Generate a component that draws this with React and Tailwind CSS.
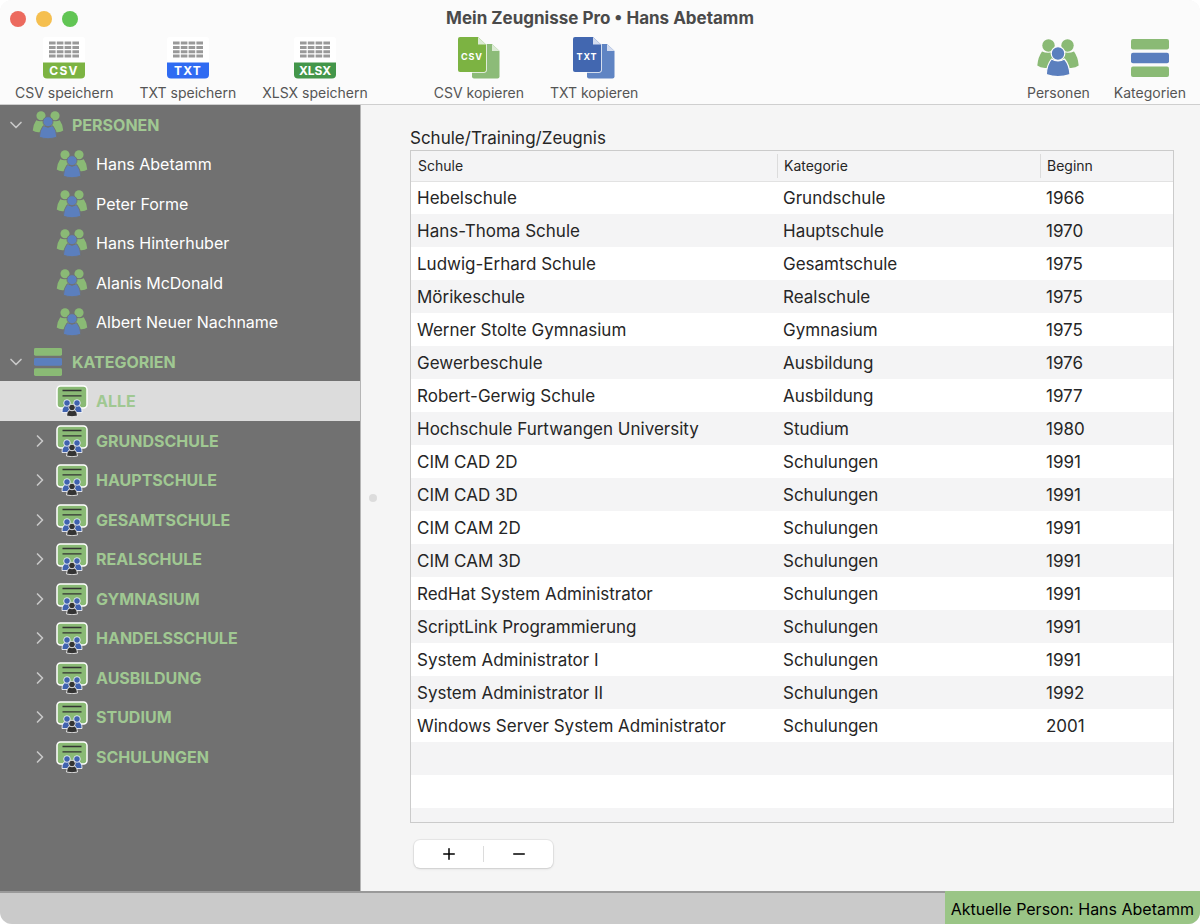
import { useState } from 'react';
import { ChevronDown, ChevronRight, Minus, Plus } from 'lucide-react';

const persons = ['Hans Abetamm', 'Peter Forme', 'Hans Hinterhuber', 'Alanis McDonald', 'Albert Neuer Nachname'];

const categories = [
  'ALLE',
  'GRUNDSCHULE',
  'HAUPTSCHULE',
  'GESAMTSCHULE',
  'REALSCHULE',
  'GYMNASIUM',
  'HANDELSSCHULE',
  'AUSBILDUNG',
  'STUDIUM',
  'SCHULUNGEN',
];

const records = [
  { school: 'Hebelschule', category: 'Grundschule', start: 1966 },
  { school: 'Hans-Thoma Schule', category: 'Hauptschule', start: 1970 },
  { school: 'Ludwig-Erhard Schule', category: 'Gesamtschule', start: 1975 },
  { school: 'Mörikeschule', category: 'Realschule', start: 1975 },
  { school: 'Werner Stolte Gymnasium', category: 'Gymnasium', start: 1975 },
  { school: 'Gewerbeschule', category: 'Ausbildung', start: 1976 },
  { school: 'Robert-Gerwig Schule', category: 'Ausbildung', start: 1977 },
  { school: 'Hochschule Furtwangen University', category: 'Studium', start: 1980 },
  { school: 'CIM CAD 2D', category: 'Schulungen', start: 1991 },
  { school: 'CIM CAD 3D', category: 'Schulungen', start: 1991 },
  { school: 'CIM CAM 2D', category: 'Schulungen', start: 1991 },
  { school: 'CIM CAM 3D', category: 'Schulungen', start: 1991 },
  { school: 'RedHat System Administrator', category: 'Schulungen', start: 1991 },
  { school: 'ScriptLink Programmierung', category: 'Schulungen', start: 1991 },
  { school: 'System Administrator I', category: 'Schulungen', start: 1991 },
  { school: 'System Administrator II', category: 'Schulungen', start: 1992 },
  { school: 'Windows Server System Administrator', category: 'Schulungen', start: 2001 },
];

// empty striped rows that fill the rest of the table
const fillerRows = [1, 2, 3, 4, 5, 6];

function PeopleIcon({ className, gap }) {
  return (
    <svg viewBox="0 0 42 38" className={className} aria-hidden="true">
      <g fill="#8aba75">
        <circle cx="11.5" cy="6.5" r="6.2" />
        <circle cx="30.5" cy="6.5" r="6.2" />
        <path d="M5 12.5Q11 15 17 12.5L18 29H8Q3 28.5 .3 26.5Q1 18 5 12.5Z" />
        <path d="M37 12.5Q31 15 25 12.5L24 29H34Q39 28.5 41.7 26.5Q41 18 37 12.5Z" />
      </g>
      <g fill="#5b7fbe" stroke={gap} strokeWidth="1.2">
        <path d="M14.5 20Q21 24 27.5 20Q32.5 26 33 35.5Q27 37.6 21 37.6Q15 37.6 9.3 35.5Q9.7 26 14.5 20Z" />
        <circle cx="21" cy="14.5" r="6.8" />
      </g>
    </svg>
  );
}

function BarsIcon({ className }) {
  return (
    <svg viewBox="0 0 38 38" className={className} aria-hidden="true">
      <rect width="38" height="10.5" rx="2" fill="#8aba75" />
      <rect y="13.7" width="38" height="10.5" rx="2" fill="#5b7fbe" />
      <rect y="27.4" width="38" height="10.5" rx="2" fill="#8aba75" />
    </svg>
  );
}

function BoardIcon() {
  return (
    <svg viewBox="0 0 32 32" className="size-8 shrink-0" aria-hidden="true">
      <rect x="1" y="1" width="30" height="22" rx="3.5" fill="#8aba75" stroke="#fff" strokeWidth="1.5" />
      <path d="M6.5 5.5H25.5M6.5 10.8H25.5" stroke="#333" strokeWidth="1.3" />
      <g fill="#3f62ae" stroke="#fff" strokeWidth=".8">
        <path d="M8 21L14 20V27.5H6Q5.5 24 8 21Z" />
        <path d="M24 21L18 20V27.5H26Q26.5 24 24 21Z" />
        <circle cx="11" cy="18" r="3.3" />
        <circle cx="21" cy="18" r="3.3" />
      </g>
      <g fill="#333" stroke="#fff" strokeWidth=".8">
        <path d="M13 25H19Q21.5 27.5 21.5 31Q16 32.5 10.5 31Q10.5 27.5 13 25Z" />
        <circle cx="16" cy="22.5" r="3.3" />
      </g>
    </svg>
  );
}

function SaveIcon({ label, color, spacing }) {
  return (
    <svg viewBox="0 0 42 42" className="size-[42px]" aria-hidden="true">
      <rect width="42" height="40" rx="3" fill="#fff" />
      <path d="M6 6H36M6 10.5H36M6 14.7H36M6 19H36" stroke="#999" strokeWidth="3" strokeDasharray="6.6 1.2" />
      <path d="M0 25.5H42V37.5Q42 41.5 38 41.5H4Q0 41.5 0 37.5Z" fill={color} />
      <text x="21" y="37.5" textAnchor="middle" fontSize="12" fontWeight="700" fill="#fff" className={spacing}>
        {label}
      </text>
    </svg>
  );
}

function CopyIcon({ label, front, back, fold }) {
  return (
    <svg viewBox="0 0 42 42" className="size-[42px]" aria-hidden="true">
      <path d="M14 9Q14 7 16 7H34L41.5 14V39.5Q41.5 41.5 39.5 41.5H16Q14 41.5 14 39.5Z" fill={back} />
      <path d="M34 7L41.5 14H34Z" fill={fold} />
      <path
        d="M0 2Q0 0 2 0H20L28 7.5V33Q28 35 26 35H2Q0 35 0 33Z"
        fill={front}
        stroke="#fbfbfb"
        strokeWidth="1.5"
        paintOrder="stroke"
      />
      <path d="M20 0L28 7.5H20Z" fill={fold} />
      <text x="14" y="23" textAnchor="middle" fontSize="9" fontWeight="700" fill="#fff" className="tracking-widest">
        {label}
      </text>
    </svg>
  );
}

function ToolButton({ label, children }) {
  return (
    <button type="button" className="flex flex-col items-center gap-1 text-sm leading-5 text-[#555]">
      <span className="flex h-[42px] items-center">{children}</span>
      {label}
    </button>
  );
}

function TreeGroup({ label, icon }) {
  return (
    <li className="flex h-[39px] items-center even:h-10">
      <button type="button" aria-expanded="true" className="flex h-full w-full items-center pl-[6px] font-bold text-[#a0c892]">
        <ChevronDown size={20} className="mr-[6px] text-[#c8c8c8]" />
        <span className="mr-2 flex w-8 justify-center">{icon}</span>
        {label}
      </button>
    </li>
  );
}

function TreeItem({ label, icon, expandable, selected, onClick, tone }) {
  return (
    <li className="flex h-[39px] items-center even:h-10">
      <button
        type="button"
        onClick={onClick}
        className={`flex h-full w-full items-center pl-[30px] text-left ${tone} ${selected ? 'bg-[#dcdcdc]' : ''}`}
      >
        <span className="mr-[6px] w-5">{expandable && <ChevronRight size={20} className="text-[#c8c8c8]" />}</span>
        <span className="mr-2 flex w-8 justify-center">{icon}</span>
        {label}
      </button>
    </li>
  );
}

export default function App() {
  const [person, setPerson] = useState('Hans Abetamm');
  const [category, setCategory] = useState('ALLE');

  return (
    <div className="flex h-screen flex-col overflow-hidden rounded-xl bg-[#f5f5f5] font-['Inter',sans-serif] text-base text-[#262626]">
      <header className="shrink-0 border-b border-[#cfcfcf] bg-[#fbfbfb]">
        <div className="grid h-9 grid-cols-[1fr_auto_1fr] items-center px-[10px] pt-px">
          <div className="flex gap-[10px]">
            <button type="button" aria-label="Schließen" className="size-4 rounded-full bg-[#ec6a5e]" />
            <button type="button" aria-label="Minimieren" className="size-4 rounded-full bg-[#f5bf4f]" />
            <button type="button" aria-label="Maximieren" className="size-4 rounded-full bg-[#61c554]" />
          </div>
          <h1 className="text-[17px] font-bold text-[#4a4a4a]">Mein Zeugnisse Pro • {person}</h1>
        </div>
        <div className="flex justify-between px-[14px] pt-px pb-px">
          <div className="flex gap-[66px] pl-px">
            <div className="flex gap-[26px]">
              <ToolButton label="CSV speichern">
                <SaveIcon label="CSV" color="#7cb342" spacing="tracking-widest" />
              </ToolButton>
              <ToolButton label="TXT speichern">
                <SaveIcon label="TXT" color="#2f6bf2" spacing="tracking-widest" />
              </ToolButton>
              <ToolButton label="XLSX speichern">
                <SaveIcon label="XLSX" color="#43964a" spacing="tracking-normal" />
              </ToolButton>
            </div>
            <div className="flex gap-[26px]">
              <ToolButton label="CSV kopieren">
                <CopyIcon label="CSV" front="#7cb342" back="#8cbb78" fold="#dcebd5" />
              </ToolButton>
              <ToolButton label="TXT kopieren">
                <CopyIcon label="TXT" front="#4267b0" back="#5f84c3" fold="#d3dcef" />
              </ToolButton>
            </div>
          </div>
          <div className="flex gap-6">
            <ToolButton label="Personen">
              <PeopleIcon className="h-[38px] w-[42px]" gap="#fbfbfb" />
            </ToolButton>
            <ToolButton label="Kategorien">
              <BarsIcon className="size-[38px]" />
            </ToolButton>
          </div>
        </div>
      </header>

      <div className="flex min-h-0 flex-1">
        <nav className="w-[30%] shrink-0 overflow-hidden bg-[#717171]">
          <ul>
            <TreeGroup label="PERSONEN" icon={<PeopleIcon className="h-7 w-8" gap="#717171" />} />
            {persons.map(name => (
              <TreeItem
                key={name}
                label={name}
                icon={<PeopleIcon className="h-7 w-8" gap="#717171" />}
                onClick={() => setPerson(name)}
                tone="text-white"
              />
            ))}
            <TreeGroup label="KATEGORIEN" icon={<BarsIcon className="size-7" />} />
            {categories.map(name => (
              <TreeItem
                key={name}
                label={name}
                icon={<BoardIcon />}
                expandable={name !== 'ALLE'}
                selected={name === category}
                onClick={() => setCategory(name)}
                tone="font-bold text-[#a0c892]"
              />
            ))}
          </ul>
        </nav>

        <div className="flex w-6 shrink-0 items-center justify-center border-l border-[#b5b5b5]">
          <span className="size-2 rounded-full bg-[#dcdcdc]" />
        </div>

        <main className="flex min-w-0 flex-1 flex-col pt-[21px] pr-[26px] pb-[23px] pl-[26px]">
          <h2 id="records-title" className="text-[17px] leading-6">Schule/Training/Zeugnis</h2>
          <div className="min-h-0 flex-1 overflow-hidden border border-[#cbcbcb]">
            <table aria-labelledby="records-title" className="w-full table-fixed border-collapse text-left text-[17px]">
              <thead>
                <tr className="h-[30px] border-b border-[#e2e2e2] bg-[#f4f4f5] text-sm">
                  <th className="pl-[7px] font-normal">Schule</th>
                  <th className="w-[263px] font-normal">
                    <div className="border-l border-[#dcdcdc] py-[2px] pl-[6px]">Kategorie</div>
                  </th>
                  <th className="w-[133px] font-normal">
                    <div className="border-l border-[#dcdcdc] py-[2px] pl-[6px]">Beginn</div>
                  </th>
                </tr>
              </thead>
              <tbody>
                {records.map(r => (
                  <tr key={r.school} className="h-[33px] bg-white even:bg-[#f4f4f5]">
                    <td className="pt-[2px] pl-[6px]">{r.school}</td>
                    <td className="pt-[2px] pl-[6px]">{r.category}</td>
                    <td className="pt-[2px] pl-[6px]">{r.start}</td>
                  </tr>
                ))}
                {fillerRows.map(n => (
                  <tr key={n} className="h-[33px] bg-white even:bg-[#f4f4f5]">
                    <td colSpan="3" />
                  </tr>
                ))}
              </tbody>
            </table>
          </div>
          <div className="mt-[17px] ml-1 flex h-7 w-[139px] shrink-0 items-center rounded-md bg-white text-black shadow-sm ring-1 ring-black/5">
            <button type="button" aria-label="Hinzufügen" className="flex flex-1 justify-center">
              <Plus size={18} />
            </button>
            <span className="h-4 w-px bg-[#dcdcdc]" />
            <button type="button" aria-label="Entfernen" className="flex flex-1 justify-center">
              <Minus size={18} />
            </button>
          </div>
        </main>
      </div>

      <footer className="flex h-[33px] shrink-0 justify-end bg-[#cacaca]">
        <div className="flex-1 border-t-2 border-[#999]" />
        <p className="flex items-center bg-[#9ac586] px-[6px] pt-[2px] text-black">Aktuelle Person: {person}</p>
      </footer>
    </div>
  );
}
